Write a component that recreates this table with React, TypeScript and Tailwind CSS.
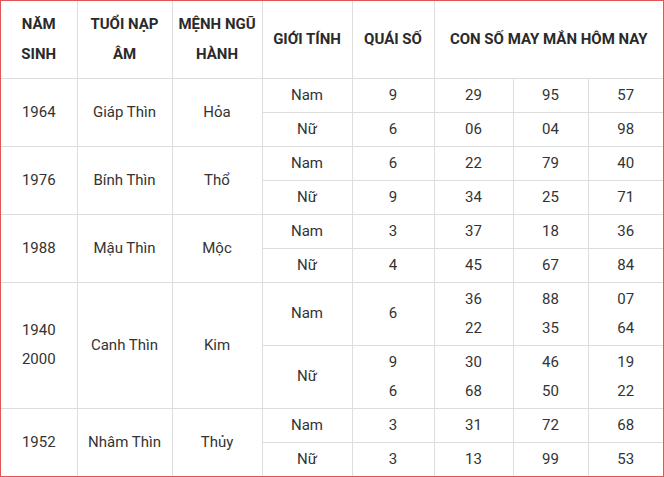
import React from "react";

type Group = {
  year: string[];
  nap: string;
  menh: string;
  rows: { gender: string; quai: string[]; nums: string[][]; h: string }[];
};

const groups: Group[] = [
  {
    year: ["1964"],
    nap: "Giáp Thìn",
    menh: "Hỏa",
    rows: [
      { gender: "Nam", quai: ["9"], nums: [["29"], ["95"], ["57"]], h: "h-[34px]" },
      { gender: "Nữ", quai: ["6"], nums: [["06"], ["04"], ["98"]], h: "h-[34px]" },
    ],
  },
  {
    year: ["1976"],
    nap: "Bính Thìn",
    menh: "Thổ",
    rows: [
      { gender: "Nam", quai: ["6"], nums: [["22"], ["79"], ["40"]], h: "h-[34px]" },
      { gender: "Nữ", quai: ["9"], nums: [["34"], ["25"], ["71"]], h: "h-[34px]" },
    ],
  },
  {
    year: ["1988"],
    nap: "Mậu Thìn",
    menh: "Mộc",
    rows: [
      { gender: "Nam", quai: ["3"], nums: [["37"], ["18"], ["36"]], h: "h-[34px]" },
      { gender: "Nữ", quai: ["4"], nums: [["45"], ["67"], ["84"]], h: "h-[34px]" },
    ],
  },
  {
    year: ["1940", "2000"],
    nap: "Canh Thìn",
    menh: "Kim",
    rows: [
      { gender: "Nam", quai: ["6"], nums: [["36", "22"], ["88", "35"], ["07", "64"]], h: "h-[63px]" },
      { gender: "Nữ", quai: ["9", "6"], nums: [["30", "68"], ["46", "50"], ["19", "22"]], h: "h-[63px]" },
    ],
  },
  {
    year: ["1952"],
    nap: "Nhâm Thìn",
    menh: "Thủy",
    rows: [
      { gender: "Nam", quai: ["3"], nums: [["31"], ["72"], ["68"]], h: "h-[34px]" },
      { gender: "Nữ", quai: ["3"], nums: [["13"], ["99"], ["53"]], h: "h-[34px]" },
    ],
  },
];

const td = "border border-[#dddddd] text-center align-middle p-0";

function Lines({ items }: { items: string[] }) {
  return (
    <div className="leading-[29px]">
      {items.map((t, i) => (
        <div key={i}>{t}</div>
      ))}
    </div>
  );
}

export default function App() {
  return (
    <div
      className="w-[664px] h-[477px] bg-white border border-[#e05555] overflow-hidden text-[15px] text-[#333333]"
      style={{ fontFamily: "Roboto, 'Noto Sans', sans-serif" }}
    >
      <table className="w-[662px] table-fixed border-collapse border-hidden">
        <colgroup>
          <col className="w-[76px]" />
          <col className="w-[95px]" />
          <col className="w-[90px]" />
          <col className="w-[90px]" />
          <col className="w-[82px]" />
          <col className="w-[79px]" />
          <col className="w-[75px]" />
          <col className="w-[75px]" />
        </colgroup>
        <thead>
          <tr className="h-[77px] font-bold leading-[30px] text-[#2a2a2a]">
            <th className={td}>NĂM<br />SINH</th>
            <th className={td}>TUỔI NẠP<br />ÂM</th>
            <th className={td}>MỆNH NGŨ<br />HÀNH</th>
            <th className={td}>GIỚI TÍNH</th>
            <th className={td}>QUÁI SỐ</th>
            <th className={td} colSpan={3}>CON SỐ MAY MẮN HÔM NAY</th>
          </tr>
        </thead>
        <tbody>
          {groups.map((g) =>
            g.rows.map((r, ri) => (
              <tr key={g.nap + ri} className={r.h}>
                {ri === 0 && (
                  <>
                    <td className={td} rowSpan={2}>
                      <Lines items={g.year} />
                    </td>
                    <td className={td} rowSpan={2}>{g.nap}</td>
                    <td className={td} rowSpan={2}>{g.menh}</td>
                  </>
                )}
                <td className={td}>{r.gender}</td>
                <td className={td}>
                  <Lines items={r.quai} />
                </td>
                {r.nums.map((n, ni) => (
                  <td key={ni} className={td}>
                    <Lines items={n} />
                  </td>
                ))}
              </tr>
            ))
          )}
        </tbody>
      </table>
    </div>
  );
}
